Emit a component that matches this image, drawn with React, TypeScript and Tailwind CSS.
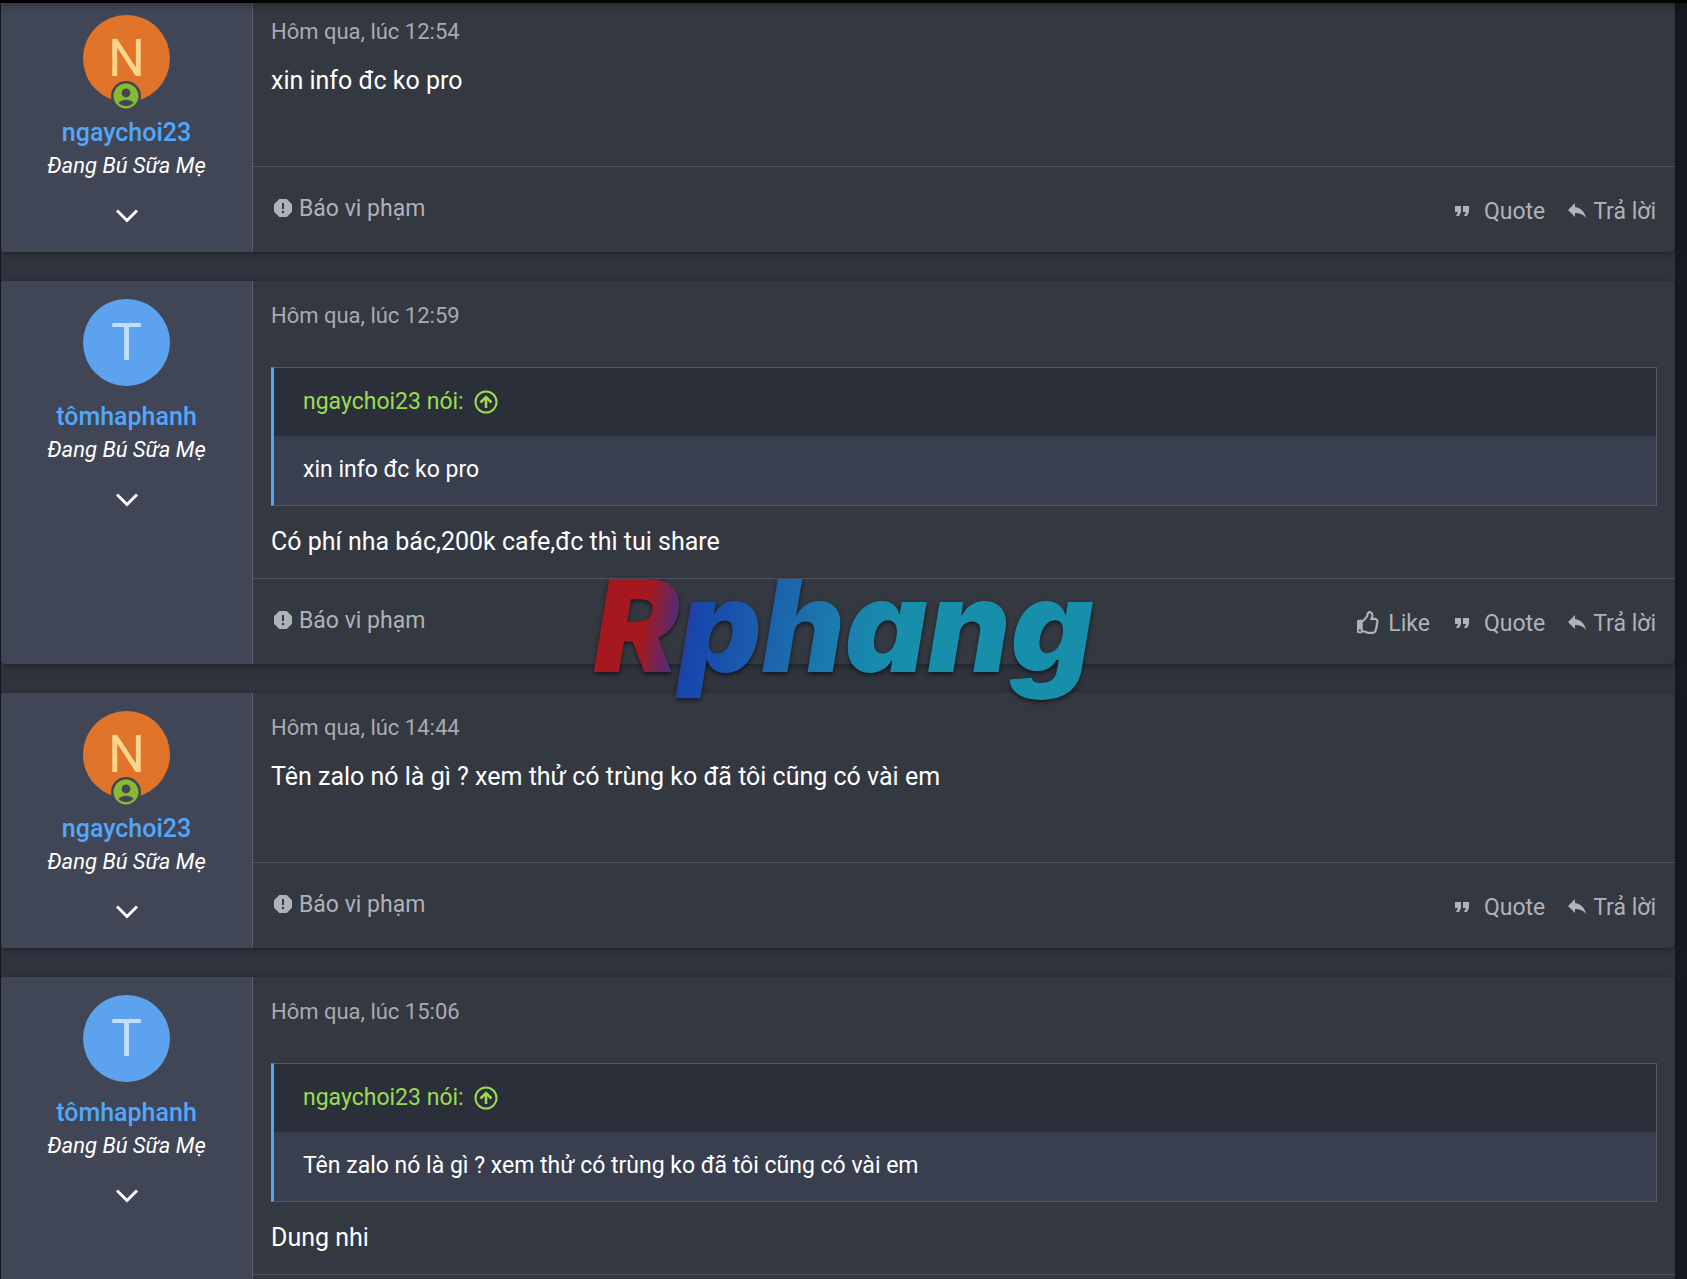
import React from 'react';
import { FaRegThumbsUp } from 'react-icons/fa';
import { MdAccountCircle, MdFormatQuote, MdReply, MdReport } from 'react-icons/md';

type User = {
  name: string;
  title: string;
  letter: string;
  avatarClass: string;
  online?: boolean;
};

type PostData = {
  id: number;
  user: User;
  date: string;
  quote?: { author: string; text: string };
  text: string;
  canLike?: boolean;
};

const ngaychoi: User = {
  name: 'ngaychoi23',
  title: 'Đang Bú Sữa Mẹ',
  letter: 'N',
  avatarClass: 'bg-[#e0742b] text-[#f8d58b]',
  online: true,
};

const tomhaphanh: User = {
  name: 'tômhaphanh',
  title: 'Đang Bú Sữa Mẹ',
  letter: 'T',
  avatarClass: 'bg-[#5da2ef] text-[#c2defa]',
};

const posts: PostData[] = [
  { id: 1, user: ngaychoi, date: 'Hôm qua, lúc 12:54', text: 'xin info đc ko pro' },
  {
    id: 2,
    user: tomhaphanh,
    date: 'Hôm qua, lúc 12:59',
    quote: { author: 'ngaychoi23', text: 'xin info đc ko pro' },
    text: 'Có phí nha bác,200k cafe,đc thì tui share',
    canLike: true,
  },
  {
    id: 3,
    user: ngaychoi,
    date: 'Hôm qua, lúc 14:44',
    text: 'Tên zalo nó là gì ? xem thử có trùng ko đã tôi cũng có vài em',
  },
  {
    id: 4,
    user: tomhaphanh,
    date: 'Hôm qua, lúc 15:06',
    quote: {
      author: 'ngaychoi23',
      text: 'Tên zalo nó là gì ? xem thử có trùng ko đã tôi cũng có vài em',
    },
    text: 'Dung nhi',
    canLike: true,
  },
];

function ArrowUpCircle() {
  return (
    <svg
      viewBox="0 0 24 24"
      className="h-6 w-6"
      fill="none"
      stroke="currentColor"
      strokeWidth="2"
      aria-hidden="true"
    >
      <circle cx="12" cy="12" r="10.500" />
      <path d="M12 18V7.500M6.500 12.500L12 7l5.500 5.500" strokeWidth="2.500" />
    </svg>
  );
}

function UserCell({ user }: { user: User }) {
  return (
    <aside className="flex w-[252px] shrink-0 flex-col items-center rounded-l border-r border-[#5a5d69] bg-[#414656] pt-[18px]">
      <div className="relative">
        <a
          href="#member"
          className={`flex h-[87px] w-[87px] items-center justify-center rounded-full text-[52px] leading-[87px] ${user.avatarClass}`}
        >
          {user.letter}
        </a>
        {user.online && (
          <span className="absolute -bottom-[9px] left-7 flex h-[30px] w-[30px] items-center justify-center rounded-full bg-[#414656]">
            <MdAccountCircle className="h-[30px] w-[30px] text-[#8ab833]" />
          </span>
        )}
      </div>
      <h4 className="mt-[15px]">
        <a href="#member" className="block text-[25px] font-medium leading-8 text-[#50a7fb]">
          {user.name}
        </a>
      </h4>
      <h5 className="mt-[3px] text-[22px] italic leading-7 text-white">{user.title}</h5>
      <button type="button" aria-label="Xem thêm" className="mt-5 p-2 text-white">
        <svg viewBox="0 0 24 16" className="h-4 w-6" fill="none" stroke="currentColor" strokeWidth="3">
          <path d="M2 2.500l10 10 10-10" />
        </svg>
      </button>
    </aside>
  );
}

function Quote({ author, text }: { author: string; text: string }) {
  return (
    <blockquote className="mt-9 border border-l-[3px] border-[#565965] border-l-[#50a7fb]">
      <a
        href="#quote"
        className="flex h-[68px] items-center gap-[10px] bg-[#2b2f3a] px-[29px] text-[23px] text-[#9bdc52]"
      >
        {author} nói:
        <ArrowUpCircle />
      </a>
      <p className="flex h-[69px] items-center bg-[#3a3f4f] px-[29px] text-[23px] text-white">
        {text}
      </p>
    </blockquote>
  );
}

function Post({ post }: { post: PostData }) {
  return (
    <article className="flex rounded-md bg-[#343841] shadow-[0_2px_6px_rgba(0,0,0,0.35)]">
      <UserCell user={post.user} />
      <div className="flex min-w-0 flex-1 flex-col">
        <div className={post.quote ? 'px-[18px] pt-5' : 'min-h-[169px] px-[18px] pt-5'}>
          <time className="block text-[22px] leading-[30px] text-[#a9abb1]">{post.date}</time>
          {post.quote && <Quote author={post.quote.author} text={post.quote.text} />}
          <p
            className={
              post.quote
                ? 'pt-[18px] pb-[18px] text-[25px] leading-9 text-white'
                : 'pt-4 text-[25px] leading-9 text-white'
            }
          >
            {post.text}
          </p>
        </div>
        <footer className="flex h-[86px] justify-between border-t border-[#50535f] pr-[19px] pl-[18px] text-[23px] leading-8 text-[#b0b2b9]">
          <a href="#report" className="flex items-start gap-1 self-start pt-[26px]">
            <MdReport className="mt-[3px] h-6 w-6" />
            Báo vi phạm
          </a>
          <div className="flex items-start gap-5 pt-[29px]">
            {post.canLike && (
              <a href="#like" className="flex items-start gap-2">
                <FaRegThumbsUp className="mt-[3px] h-[23px] w-[23px]" />
                Like
              </a>
            )}
            <a href="#quote" className="flex items-start gap-[10px]">
              <MdFormatQuote className="mt-[3px] h-6 w-6" />
              Quote
            </a>
            <a href="#reply" className="flex items-start gap-1">
              <MdReply className="mt-[2px] h-6 w-6" />
              Trả lời
            </a>
          </div>
        </footer>
      </div>
    </article>
  );
}

export default function App() {
  return (
    <div className="h-screen overflow-hidden bg-[#151922] font-[Roboto,sans-serif]">
      <header className="fixed inset-x-0 top-0 z-20 h-[3px] bg-black shadow-[0_2px_6px_rgba(0,0,0,0.5)]" />
      <main className="-mt-[3px] mr-3 ml-px flex flex-col gap-[29px] bg-[#2f333d]">
        {posts.map((post) => (
          <Post key={post.id} post={post} />
        ))}
      </main>
      <div className="pointer-events-none fixed inset-0 z-10 flex items-center justify-center">
        <span className="bg-[linear-gradient(100deg,#a5181d_14%,#5c2a6c_19%,#1746ac_23%,#1b61ab_36%,#1a80ae_50%,#178fab_60%)] bg-clip-text px-4 pb-7 font-[Inter,sans-serif] text-[128px] leading-[150px] font-black italic text-transparent drop-shadow-[0_2px_2px_rgba(0,0,0,0.6)]">
          Rphang
        </span>
      </div>
    </div>
  );
}
